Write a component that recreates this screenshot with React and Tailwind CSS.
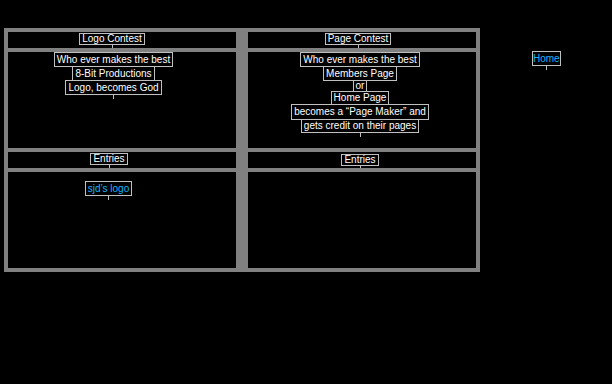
import React from "react";

function Box({ children, h = "h-[15px]", blue = false, overlap = false, tight = false }) {
  return (
    <div
      className={`flex items-center justify-center border border-[#c0c0c0] ${tight ? "px-0" : "px-[2px]"} text-[10px] leading-none whitespace-nowrap ${h} ${
        blue ? "text-[#14b4ff]" : "text-white"
      } ${overlap ? "-mt-px" : ""}`}
    >
      {children}
    </div>
  );
}

function Tick() {
  return <div className="w-px h-[4px] bg-[#c0c0c0]" />;
}

export default function App() {
  return (
    <div className="w-[612px] h-[384px] bg-black flex items-start pt-[28px] pl-1 font-['Liberation_Sans',Arial,sans-serif]">
      <div className="bg-[#808080] p-1 grid grid-cols-[228px_228px] grid-rows-[16px_96px_16px_96px] gap-x-3 gap-y-1">
        {/* Row 1 headers */}
        <div className="bg-black flex flex-col items-center pr-[20px] pt-px">
          <Box>Logo Contest</Box>
          <Tick />
        </div>
        <div className="bg-black flex flex-col items-center pr-[8px] pt-px">
          <Box>Page Contest</Box>
          <Tick />
        </div>

        {/* Row 2 bodies */}
        <div className="bg-black flex flex-col items-center pr-[17px]">
          <Box>Who ever makes the best</Box>
          <Box overlap>8-Bit Productions</Box>
          <Box overlap>Logo, becomes God</Box>
          <Tick />
        </div>
        <div className="bg-black flex flex-col items-center pr-[4px]">
          <Box>Who ever makes the best</Box>
          <Box overlap>Members Page</Box>
          <Box overlap h="h-[12px]">or</Box>
          <Box overlap h="h-[14px]">Home Page</Box>
          <Box overlap h="h-[16px]">becomes a “Page Maker” and</Box>
          <Box overlap h="h-[14px]">gets credit on their pages</Box>
          <Tick />
        </div>

        {/* Row 3 headers */}
        <div className="bg-black flex flex-col items-center pr-[26px] pt-px">
          <Box>Entries</Box>
          <Tick />
        </div>
        <div className="bg-black flex flex-col items-center pr-[4px] pt-[2px]">
          <Box>Entries</Box>
          <Tick />
        </div>

        {/* Row 4 bodies */}
        <div className="bg-black flex flex-col items-center pr-[27px] pt-[9px]">
          <Box blue>sjd’s logo</Box>
          <Tick />
        </div>
        <div className="bg-black" />
      </div>

      <div className="ml-[52px] mt-[23px] flex flex-col items-center">
        <Box blue tight>Home</Box>
        <Tick />
      </div>
    </div>
  );
}
